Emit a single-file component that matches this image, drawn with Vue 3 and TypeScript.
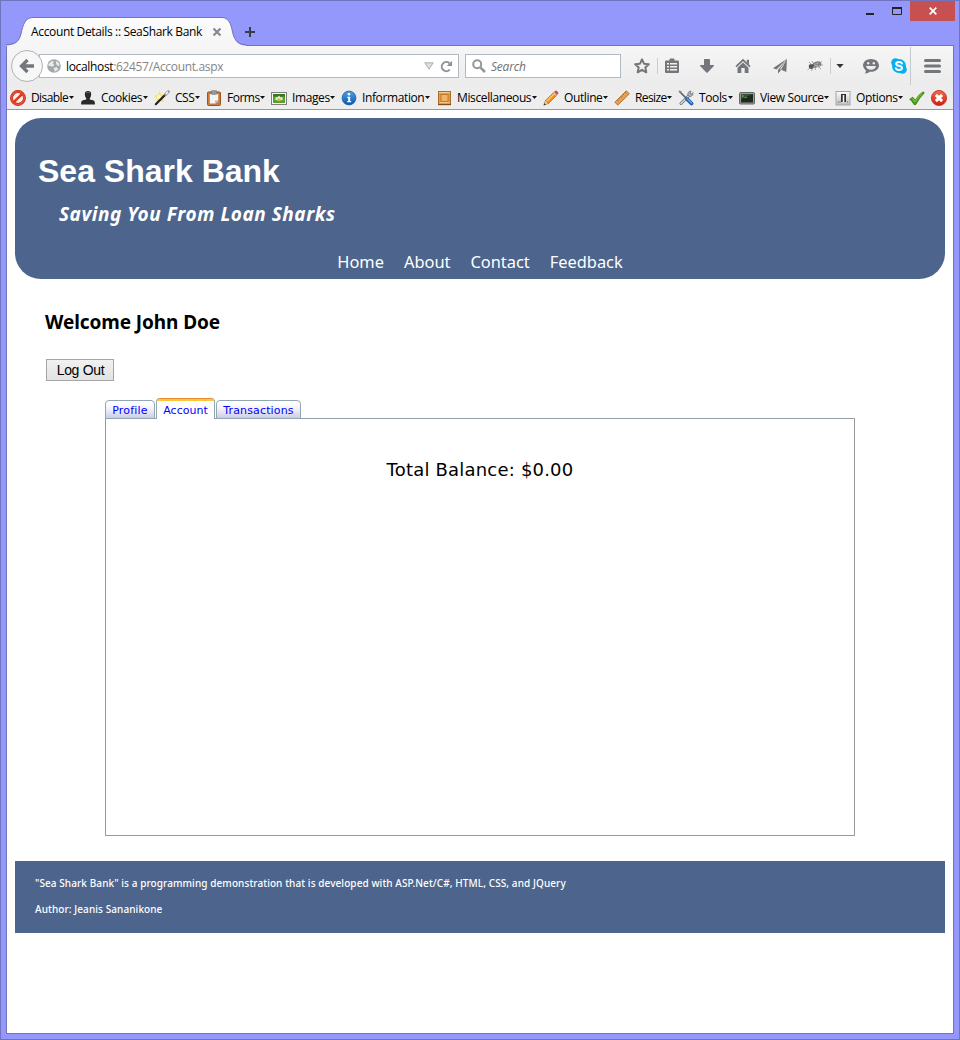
<script setup lang="ts">
interface DevTool {
  id: string
  label?: string
}

const navIcons: { id: string; w: number; h: number }[] = [
  { id: 'star', w: 16, h: 16 },
  { id: 'sep', w: 1, h: 16 },
  { id: 'list', w: 16, h: 16 },
  { id: 'down', w: 16, h: 16 },
  { id: 'home', w: 16, h: 16 },
  { id: 'plane', w: 16, h: 16 },
  { id: 'bug', w: 16, h: 16 },
  { id: 'sep', w: 1, h: 16 },
  { id: 'drop', w: 8, h: 16 },
  { id: 'smile', w: 16, h: 16 },
  { id: 'skype', w: 16, h: 16 },
  { id: 'tallsep', w: 1, h: 38 },
  { id: 'menu', w: 17, h: 16 },
]

const devTools: DevTool[] = [
  { id: 'disable', label: 'Disable' },
  { id: 'cookies', label: 'Cookies' },
  { id: 'css', label: 'CSS' },
  { id: 'forms', label: 'Forms' },
  { id: 'images', label: 'Images' },
  { id: 'info', label: 'Information' },
  { id: 'misc', label: 'Miscellaneous' },
  { id: 'outline', label: 'Outline' },
  { id: 'resize', label: 'Resize' },
  { id: 'tools', label: 'Tools' },
  { id: 'source', label: 'View Source' },
  { id: 'options', label: 'Options' },
  { id: 'check' },
  { id: 'error' },
]

const siteLinks: string[] = ['Home', 'About', 'Contact', 'Feedback']
const tabs: string[] = ['Profile', 'Account', 'Transactions']
const activeTab = 'Account'
</script>

<template>
  <svg class="defs" width="0" height="0" aria-hidden="true">
    <defs>
      <linearGradient id="gRed" x1="0" y1="0" x2="0" y2="1">
        <stop offset="0" stop-color="#f4694c" />
        <stop offset="1" stop-color="#cf1f12" />
      </linearGradient>
      <linearGradient id="gBlue" x1="0" y1="0" x2="0" y2="1">
        <stop offset="0" stop-color="#4fa3e6" />
        <stop offset="1" stop-color="#0d55ad" />
      </linearGradient>
      <linearGradient id="gGrey" x1="0" y1="0" x2="0" y2="1">
        <stop offset="0" stop-color="#fdfdfd" />
        <stop offset="1" stop-color="#bdbdbd" />
      </linearGradient>
      <symbol id="star" viewBox="0 0 16 16">
        <path d="M8 1.400 10 5.700 14.800 6.200 11.300 9.400 12.300 14.300 8 11.800 3.700 14.300 4.700 9.400 1.200 6.200 6 5.700Z" fill="none" stroke="#73767a" stroke-width="2" stroke-linejoin="round" />
      </symbol>
      <symbol id="sep" viewBox="0 0 1 16"><rect width="1" height="16" fill="#c9ced3" /></symbol>
      <symbol id="tallsep" viewBox="0 0 1 38"><rect width="1" height="38" fill="#c2c9d0" /></symbol>
      <symbol id="list" viewBox="0 0 16 16">
        <path d="M2 2.500H5.500V1.500Q5.500.5 6.500.5H9.500Q10.500.5 10.500 1.500V2.500H14Q15 2.500 15 3.500V14Q15 15 14 15H2Q1 15 1 14V3.500Q1 2.500 2 2.500Z" fill="#73767a" />
        <path d="M3 5H5V6.500H3ZM6 5H13V6.500H6ZM3 8H5V9.500H3ZM6 8H13V9.500H6ZM3 11H5V12.500H3ZM6 11H13V12.500H6Z" fill="#efefef" />
      </symbol>
      <symbol id="down" viewBox="0 0 16 16">
        <path d="M5 1.500Q5 1 5.500 1H10.500Q11 1 11 1.500V7H14.500Q15.500 7.200 14.700 8.200L8.600 14.600Q8 15.200 7.400 14.600L1.300 8.200Q.5 7.200 1.500 7H5Z" fill="#73767a" />
      </symbol>
      <symbol id="home" viewBox="0 0 16 16">
        <path d="M8 .8 15.600 8 14.400 9.300 8 3.300 1.600 9.300.4 8Z" fill="#73767a" />
        <path d="M11.800 1.800H14V6.500L11.800 4.500ZM2.500 9.700 8 4.600 13.500 9.700V15H9.700V10H6.300V15H2.500Z" fill="#73767a" />
      </symbol>
      <symbol id="plane" viewBox="0 0 16 16">
        <path d="M15 .8 1 10.300 4.600 11.500ZM15 .8 6 12V15.500L8.300 12.900ZM15 .8 14.300 14 8 11.200Z" fill="#73767a" />
      </symbol>
      <symbol id="bug" viewBox="0 0 16 16">
        <ellipse cx="9.800" cy="6.600" rx="4.600" ry="2.900" transform="rotate(-18 9.800 6.600)" fill="#777b7c" />
        <ellipse cx="4.400" cy="8.500" rx="2.600" ry="2.400" fill="#515554" />
        <path d="M5 7 2 4M6 9 4.500 13M8 9 8.500 12M11 8.500 14 11M7 6 5 3M12 5.500 15 3.500M3 10 .5 12M13 7H16" stroke="#858888" fill="none" stroke-width=".7" />
        <path d="M7 6.500 12 4.800M6.500 8.300 11 7M9 9 13 7.500" stroke="#c6c9c9" stroke-width=".7" />
      </symbol>
      <symbol id="drop" viewBox="0 0 8 16"><path d="M.4 6H7.600L4 10Z" fill="#333" /></symbol>
      <symbol id="smile" viewBox="0 0 16 16">
        <path d="M8 1C12.500 1 16 3.800 16 7.500S12.500 13.800 8 13.800H6.800Q5.500 15.300 1.800 15.500 3.200 14 2.800 12.500.2 10.500 0 7.500C0 3.800 3.500 1 8 1Z" fill="#73767a" />
        <circle cx="5.200" cy="5.200" r="1.200" fill="#eee" /><circle cx="10.800" cy="5.200" r="1.200" fill="#eee" />
        <path d="M3 8H13Q12.200 11.800 8 11.800T3 8Z" fill="#eee" />
      </symbol>
      <symbol id="skype" viewBox="0 0 16 16">
        <circle cx="8" cy="8" r="7" fill="#08aeed" /><circle cx="4.500" cy="4.500" r="4.300" fill="#08aeed" /><circle cx="11.500" cy="11.500" r="4.300" fill="#08aeed" />
        <path d="M11 5.500Q10.300 4.100 8 4.100 5.200 4.100 5.200 5.900 5.200 7.300 8 7.800 11 8.400 11 10.100 10.800 11.900 8 11.900 5.400 11.900 4.900 10.300" fill="none" stroke="#fff" stroke-width="2" stroke-linecap="round" />
      </symbol>
      <symbol id="menu" viewBox="0 0 17 16">
        <path d="M1.500 2.500H15.500M1.500 8H15.500M1.500 13.500H15.500" stroke="#73767a" stroke-width="3" stroke-linecap="round" />
      </symbol>

      <symbol id="disable" viewBox="0 0 16 16">
        <circle cx="8" cy="8" r="6.500" fill="#fbeae6" stroke="#b5230f" stroke-width="2.800" />
        <circle cx="8" cy="8" r="6.400" fill="none" stroke="#e84a30" stroke-width="2" />
        <path d="M3.800 12.200 12.200 3.800" stroke="#dc3824" stroke-width="2.500" />
      </symbol>
      <symbol id="cookies" viewBox="0 0 16 16">
        <path d="M8 1Q11.200 1 11.200 4.200 11 7 9.800 8.200V9.500L13.800 10.500Q15 11 15 14.500H1Q1 11 2.200 10.500L6.200 9.500V8.200Q5 7 4.800 4.200 4.800 1 8 1Z" fill="#2a2a2a" />
        <path d="M6 3Q8 1.500 9.800 3" stroke="#666" fill="none" />
      </symbol>
      <symbol id="css" viewBox="0 0 16 16">
        <path d="M5.500 1 7 4.500 11 5 8.500 8 10 12.500 6 10.500 2 13 3 8.500 0 5.500 4 5Z" fill="#fbe257" />
        <circle cx="5" cy="7" r="2" fill="#fff9b8" />
        <path d="M1.800 14.200 12 4" stroke="#222" stroke-width="2.200" stroke-linecap="round" />
        <path d="M11.500 4.500 14.300 1.700" stroke="#8a8a8a" stroke-width="2.800" stroke-linecap="round" />
        <path d="M11.700 4.300 14.200 1.800" stroke="#fff" stroke-width="1.400" />
      </symbol>
      <symbol id="forms" viewBox="0 0 16 16">
        <rect x="1.500" y="2" width="13" height="13.500" rx="1" fill="#c97a3d" stroke="#9a5521" />
        <path d="M3.800 4H12.200V11L9.500 13.500H3.800Z" fill="#f4f4f6" />
        <path d="M12.200 10.500H9.200V13.500Z" fill="#a9adb8" />
        <rect x="5" y=".7" width="6" height="3.600" rx="1" fill="#9a9a9a" stroke="#666" stroke-width=".6" />
      </symbol>
      <symbol id="images" viewBox="0 0 16 16">
        <rect x=".5" y="2.500" width="15" height="12" fill="#fafafa" stroke="#7f7f7f" />
        <rect x="2" y="4" width="12" height="9" fill="#56a22f" />
        <path d="M2 4H14V6.500H2Z" fill="#35781e" />
        <path d="M4 9.500 5 7 6.500 7.500 8 5.500 9.500 7.500 11 7 12 9.500 8 11Z" fill="#e6f0d8" />
        <ellipse cx="8" cy="9.700" rx="2" ry="1.300" fill="#d8b833" />
      </symbol>
      <symbol id="info" viewBox="0 0 16 16">
        <circle cx="8" cy="8" r="6.900" fill="url(#gBlue)" stroke="#1659a6" stroke-width=".8" />
        <circle cx="8" cy="4.300" r="1.300" fill="#fff" />
        <path d="M6.300 6.800H9.200V11H10.200V12.300H6.200V11H7.200V8H6.300Z" fill="#fff" />
      </symbol>
      <symbol id="misc" viewBox="0 0 16 16">
        <rect x="2.500" y="1.500" width="12" height="13" fill="#e39a4a" stroke="#b06c27" />
        <path d="M3 2.500H14M4 12.500H13" stroke="#f6cb90" />
        <rect x="5" y="4.500" width="7" height="7" fill="#f0b469" stroke="#bf7a30" />
        <path d="M2 14.700H15" stroke="#844509" />
      </symbol>
      <symbol id="outline" viewBox="0 0 16 16">
        <path d="M.8 15.200 2.500 10.500 5.500 13.500Z" fill="#f1d5a8" stroke="#986935" stroke-width=".6" />
        <path d="M.8 15.200 1.400 13.200 2.800 14.500Z" fill="#222" />
        <path d="M2.500 10.500 11 2 14 5 5.500 13.500Z" fill="#f28c1a" stroke="#ab5810" stroke-width=".6" />
        <path d="M3.500 11.500 12 3" stroke="#fccc74" stroke-width="1.400" />
        <path d="M11 2 12 1Q13 0 14 1L15 2Q16 3 15 4L14 5Z" fill="#d64c55" /><path d="M10.500 2.500 13.500 5.500" stroke="#bbc2c8" stroke-width="1.300" />
      </symbol>
      <symbol id="resize" viewBox="0 0 16 16">
        <path d="M.8 12.200 12.300.8 15.300 3.800 3.800 15.200Z" fill="#dfa05a" stroke="#a86422" stroke-width=".8" />
        <path d="M3 10 4.300 11.300M5 8 6 9M7 6 8.300 7.300M9 4 10 5M11 2 12.300 3.300" stroke="#a3672b" stroke-width=".7" />
      </symbol>
      <symbol id="tools" viewBox="0 0 16 16">
        <path d="M3 13.500 12 4.500" stroke="#666d72" stroke-width="3" stroke-linecap="round" />
        <path d="M3 13.500 12 4.500" stroke="#d0d5d8" stroke-width="1.700" stroke-linecap="round" />
        <path d="M15 2.500Q15.500 6 12.500 6.500 9.500 6.500 9.800 3.500 10.500 1 13 1L12 3.500 13 4.500Z" fill="#b5bbbe" stroke="#646b70" stroke-width=".7" />
        <path d="M1.500 1.500 9 9" stroke="#5c6264" stroke-width="1.700" /><path d="M1 1 3.500 2.500" stroke="#858b8d" stroke-width="2" />
        <path d="M9.200 9.200 13.500 13.500" stroke="#1f5ea9" stroke-width="3.800" stroke-linecap="round" /><path d="M9.500 9 13.500 13" stroke="#68a8e8" stroke-width="1.400" stroke-linecap="round" />
      </symbol>
      <symbol id="source" viewBox="0 0 16 16">
        <rect x=".5" y="2.500" width="15" height="11.500" rx="1" fill="#9a9a9a" stroke="#666" />
        <rect x="2" y="4" width="12" height="8.500" fill="#1d2d1c" />
        <path d="M2 4H14L2 9Z" fill="#38523a" />
        <path d="M3 5 4.500 6 3 7M5.500 7.500H8" stroke="#76c060" fill="none" stroke-width=".7" />
      </symbol>
      <symbol id="options" viewBox="0 0 16 16">
        <rect x="1" y="1.500" width="14" height="13.500" fill="url(#gGrey)" stroke="#a5a5a5" />
        <rect x="6" y="4" width="5" height="8" fill="#2f2f2f" />
        <rect x="7.700" y="5" width="1.600" height="7.500" fill="#f4f4f4" />
        <path d="M3.500 11V13M5 11V13M12.500 11V13" stroke="#888" stroke-width=".8" />
      </symbol>
      <symbol id="check" viewBox="0 0 16 16">
        <path d="M.8 9.200 3.800 7.200 6.200 10.200Q9.500 4.500 14.300 1.800L15.200 3Q10 8 6.800 14.600H5Q3.500 11.500.8 9.200Z" fill="#529f16" stroke="#337a0b" stroke-width=".8" />
        <path d="M3.500 8.500 6 11.500Q9 6.500 13 3.500" stroke="#91cf4c" fill="none" />
      </symbol>
      <symbol id="error" viewBox="0 0 16 16">
        <circle cx="8" cy="8" r="7.600" fill="url(#gRed)" stroke="#c42a1a" stroke-width=".8" />
        <path d="M4.900 4.900 11.100 11.100M11.100 4.900 4.900 11.100" stroke="#fff" stroke-width="3" />
      </symbol>
    </defs>
  </svg>

  <div class="window">
    <header class="titlebar">
      <div class="browser-tab">
        <svg class="tab-shape" width="240" height="29" viewBox="0 0 240 29">
          <defs>
            <linearGradient id="gTab" x1="0" y1="0" x2="0" y2="1">
              <stop offset="0" stop-color="#fcfcfc" />
              <stop offset="1" stop-color="#f5f5f5" />
            </linearGradient>
          </defs>
          <path d="M0 28.500C9 28.500 13 25 15 17.500C17 7 19.500.5 27 .5H216C222 .5 225 6 226.500 15C228.500 24 232 28.500 240 28.500V30H0Z" fill="url(#gTab)" />
          <path d="M0 27.500C9 27.500 13 24.500 15 17C17 7 19.500.5 27 .5H216C222 .5 225 6 226.500 15C228.500 23.500 232 27.500 240 27.500" fill="none" stroke="#7174bd" />
        </svg>
        <span class="tab-title">Account Details :: SeaShark Bank</span>
        <svg class="tab-close" width="10" height="10" viewBox="0 0 10 10">
          <path d="M1.500 1.500 8.500 8.500M8.500 1.500 1.500 8.500" stroke="#858a92" stroke-width="2.200" />
        </svg>
      </div>
      <svg class="new-tab" width="10" height="10" viewBox="0 0 10 10"><path d="M5 0V10M0 5H10" stroke="#3a3b4b" stroke-width="2" /></svg>
      <div class="controls">
        <svg width="45" height="20" viewBox="0 0 45 20" class="minmax">
          <path d="M1 14H9" stroke="#222" stroke-width="2" />
          <path d="M27.500 8V14.500H36.500V8" fill="none" stroke="#222" /><path d="M27 8H37" stroke="#222" stroke-width="2" />
        </svg>
        <div class="close">
          <svg width="8" height="8" viewBox="0 0 8 8"><path d="M.7.7 7.300 7.300M7.300.7.7 7.300" stroke="#fff" stroke-width="1.700" /></svg>
        </div>
      </div>
    </header>

    <div class="frame">
      <div class="chrome">
        <div class="navbar">
          <div class="back">
            <svg width="16" height="16" viewBox="0 0 16 16"><path d="M15 8H3M8.500 2 2.500 8 8.500 14" fill="none" stroke="#73767a" stroke-width="3.300" /></svg>
          </div>
          <div class="urlbar">
            <svg class="globe" width="14" height="14" viewBox="0 0 14 14">
              <circle cx="7" cy="7" r="6.800" fill="#a5a8aa" />
              <path d="M1.500 5 4 2.500 7 2 6 4.500 7.500 6 5 8 4 7 1.500 7ZM9 2 12 4 12.500 7 10 6.500 9 4.500ZM6.500 9 10 8 11 10.500 8 12.800Z" fill="#e8e9ea" />
            </svg>
            <span class="url"><b>localhost</b>:62457/Account.aspx</span>
            <svg class="history" width="10" height="8" viewBox="0 0 10 8"><path d="M.8.8H9.200L5 7.200Z" fill="#dde0e4" stroke="#a7afb8" /></svg>
            <svg class="reload" width="13" height="13" viewBox="0 0 13 13">
              <path d="M9.800 9.700A4.600 4.600 0 1 1 9.400 3.200" fill="none" stroke="#8a939b" stroke-width="2" />
              <path d="M12 .8V6H6.800Z" fill="#8a939b" />
            </svg>
          </div>
          <div class="search">
            <svg width="14" height="14" viewBox="0 0 14 14">
              <circle cx="5.200" cy="5.200" r="4" fill="none" stroke="#979797" stroke-width="2" />
              <path d="M8.300 8.300 13 13" stroke="#979797" stroke-width="2.600" />
            </svg>
            <i>Search</i>
          </div>
          <div class="nav-icons">
            <svg v-for="(icon, i) in navIcons" :key="i" :width="icon.w" :height="icon.h"><use :href="'#' + icon.id" /></svg>
          </div>
        </div>
        <div class="devbar">
          <div v-for="tool in devTools" :key="tool.id" class="tool">
            <svg width="16" height="16"><use :href="'#' + tool.id" /></svg>
            <span v-if="tool.label" class="label" :class="tool.id">{{ tool.label }}</span>
            <svg v-if="tool.label" class="caret" width="5" height="3" viewBox="0 0 5 3"><path d="M0 0H5L2.500 3Z" fill="#111" /></svg>
          </div>
        </div>
      </div>

      <div class="page">
        <div class="banner">
          <h1>Sea Shark Bank</h1>
          <p class="tagline">Saving You From Loan Sharks</p>
          <nav>
            <a v-for="link in siteLinks" :key="link">{{ link }}</a>
          </nav>
        </div>
        <main>
          <h2>Welcome John Doe</h2>
          <button type="button">Log Out</button>
          <div class="tabset">
            <div class="tab-row">
              <a v-for="tab in tabs" :key="tab" class="tab" :class="[tab.toLowerCase(), { active: tab === activeTab }]">{{ tab }}</a>
            </div>
            <div class="panel"><p>Total Balance: $0.00</p></div>
          </div>
        </main>
        <footer>
          <p>"Sea Shark Bank" is a programming demonstration that is developed with ASP.Net/C#, HTML, CSS, and JQuery</p>
          <p>Author: Jeanis Sananikone</p>
        </footer>
      </div>
    </div>
  </div>
</template>

<style>
body {
  margin: 0;
}
</style>

<style scoped>
* {
  box-sizing: border-box;
}
.defs {
  position: absolute;
}
svg {
  display: block;
  flex: none;
}
.window {
  width: 960px;
  height: 1040px;
  display: flex;
  flex-direction: column;
  background: #9598fb;
  border: 1px solid #7073bd;
  padding: 0 5px 5px;
  font: 12px/16px "Open Sans", "Noto Sans", sans-serif;
  color: #000;
  white-space: nowrap;
}
.titlebar {
  height: 44px;
  display: flex;
  align-items: flex-start;
}
.browser-tab {
  position: relative;
  width: 239px;
  height: 28px;
  margin-top: 16px;
  padding-left: 25px;
  display: flex;
  align-items: center;
}
.tab-shape {
  position: absolute;
  left: 0;
  top: 0;
  z-index: 1;
}
.tab-title {
  position: relative;
  z-index: 2;
  width: 181px;
  margin-top: 2px;
  letter-spacing: -0.35px;
}
.tab-close {
  position: relative;
  z-index: 2;
  margin-top: 2px;
}
.new-tab {
  margin-top: 26px;
}
.controls {
  display: flex;
  margin-left: auto;
  margin-right: -1px;
}
.minmax {
  margin-top: -1px;
}
.close {
  width: 45px;
  height: 20px;
  background: #c75050;
  display: flex;
  align-items: center;
  justify-content: center;
}
.frame {
  flex: 1;
  border: 1px solid #7073bd;
  background: #fff;
}
.chrome {
  height: 64px;
  background: linear-gradient(#f6f6f6, #ececec 60%, #eeeeee);
  border-bottom: 1px solid #999;
}
.navbar {
  height: 40px;
  display: flex;
  align-items: center;
  padding-left: 4px;
}
.back {
  position: relative;
  z-index: 1;
  width: 32px;
  height: 32px;
  border: 1px solid #aeb3b8;
  border-radius: 50%;
  background: #f7f7f7;
  display: flex;
  align-items: center;
  justify-content: center;
}
.urlbar {
  width: 420px;
  height: 24px;
  margin-left: -4px;
  padding-left: 7px;
  display: flex;
  align-items: center;
  background: #fff;
  border: 1px solid #b1bac4;
}
.url {
  width: 357px;
  margin: 2px 0 0 5px;
  color: #858585;
  letter-spacing: -0.34px;
}
.url b {
  font-weight: 400;
  color: #000;
}
.history {
  margin-left: 1px;
}
.reload {
  margin-left: 6px;
}
.search {
  width: 156px;
  height: 24px;
  margin-left: 6px;
  padding-left: 6px;
  display: flex;
  align-items: center;
  gap: 5px;
  background: #fff;
  border: 1px solid #b1bac4;
  color: #707070;
  letter-spacing: -0.2px;
}
.search i {
  margin-top: 2px;
}
.nav-icons {
  display: grid;
  grid-template-columns: 29px 8px 22px 35px 36px 37px 35px 8px 13px 35px 28px 4px 30px;
  justify-items: end;
  align-items: center;
}
.devbar {
  height: 23px;
  padding-left: 3px;
  display: grid;
  grid-template-columns: 70px 74px 52px 65px 70px 95px 107px 71px 64px 61px 96px 74px 22px 16px;
  align-items: center;
}
.tool {
  display: flex;
  align-items: center;
}
.label {
  flex: 1;
  width: 0;
  margin-left: 5px;
  letter-spacing: -0.38px;
}
.label.disable,
.label.resize {
  letter-spacing: -0.6px;
}
.label.forms,
.label.css {
  letter-spacing: -0.5px;
}
.caret {
  margin-right: 6px;
}
.page {
  padding: 8px;
  font-family: "Noto Sans", "Open Sans", sans-serif;
}
.banner {
  height: 161px;
  border-radius: 26px;
  background: #4d658d;
  color: #fff;
  overflow: hidden;
}
h1 {
  margin: 34px 0 0 23px;
  font: bold 32px/38px "Liberation Sans", Arial, sans-serif;
}
.tagline {
  margin: 10px 0 0 44px;
  font-size: 19px;
  line-height: 28px;
  font-weight: 700;
  font-style: italic;
  letter-spacing: 0.54px;
}
nav {
  display: flex;
  justify-content: center;
  gap: 20px;
  margin-top: 22px;
  font-size: 16.400px;
  line-height: 24px;
}
main {
  height: 582px;
  padding: 29px 30px 0;
}
h2 {
  margin: 0;
  font-size: 19px;
  line-height: 28px;
  letter-spacing: -0.08px;
}
button {
  display: block;
  width: 68px;
  height: 22px;
  margin: 23px 0 0 1px;
  padding: 1px 0 0 1px;
  border: 1px solid #a5a5a5;
  background: linear-gradient(#f1f1f1, #e2e2e2);
  color: #000;
  font: 14px/19px "Liberation Sans", Arial, sans-serif;
  letter-spacing: -0.3px;
}
.tabset {
  width: 750px;
  margin: 17px 0 0 60px;
  font-family: "DejaVu Sans", Verdana, sans-serif;
}
.tab-row {
  position: relative;
  z-index: 1;
  height: 21px;
  display: flex;
  align-items: flex-start;
  gap: 1px;
}
.tab {
  height: 19px;
  margin-top: 2px;
  border: 1px solid #91a7b4;
  border-radius: 4px 4px 0 0;
  background: linear-gradient(#fff 15%, #f0eff9 50%, #cdcbe4);
  color: #00f;
  font-size: 11px;
  line-height: 19px;
  text-align: center;
}
.profile {
  width: 50px;
  letter-spacing: 0.2px;
}
.account {
  width: 59px;
}
.transactions {
  width: 85px;
  letter-spacing: 0.14px;
}
.tab.active {
  height: 21px;
  margin-top: 0;
  padding-top: 3px;
  border-width: 0 1px;
  background: linear-gradient(#e68b2c 1px, #ffc73c 1px, #ffc73c 3px, #fff 3px) border-box;
}
.panel {
  height: 418px;
  margin-top: -1px;
  border: 1px solid #999;
  border-top-color: #91a0a8;
}
.panel p {
  margin: 39px 0 0;
  text-align: center;
  font-size: 18px;
  line-height: 24px;
  letter-spacing: 0.2px;
}
footer {
  height: 72px;
  padding: 14px 20px 0;
  background: #4d658d;
  color: #fff;
  font-size: 10px;
  line-height: 16px;
  font-weight: 500;
  letter-spacing: 0.087px;
}
footer p {
  margin: 0 0 10px;
}
</style>
